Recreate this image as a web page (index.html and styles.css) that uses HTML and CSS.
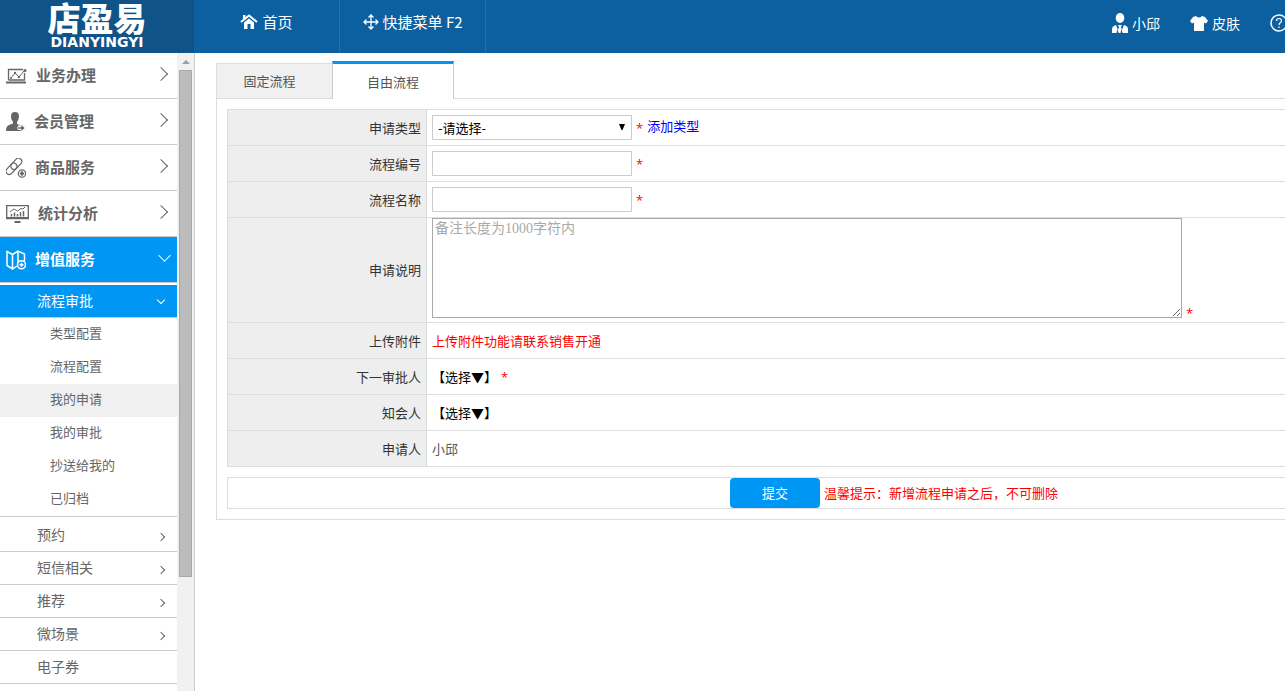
FILE: index.html
```html
<!DOCTYPE html>
<html lang="zh-CN">
<head>
<meta charset="utf-8">
<title>店盈易</title>
<link rel="stylesheet" href="styles.css">
</head>
<body>
<header class="header">
  <div class="logo"><span class="logo-name">店盈易</span><span class="logo-latin">DIANYINGYI</span></div>
  <nav class="top-nav">
    <a class="top-link home" href="#"><svg width="18" height="16" viewBox="0 0 18 16"><path d="M1 8 9 1.5 17 8" fill="none" stroke="#fff" stroke-width="2"/><path d="M3 1h2.500v3L3 6zM4 8.500 9 4.500l5 4V15h-3.500v-5h-3v5H4z" fill="#fff"/></svg>首页</a>
    <a class="top-link quick" href="#"><svg width="16" height="16" viewBox="0 0 16 16" fill="none" stroke="#fff" stroke-width="1.300"><path d="M8 1v14M1 8h14M5.500 3.500 8 1l2.500 2.500M5.500 12.500 8 15l2.500-2.500M3.500 5.500 1 8l2.500 2.500M12.500 5.500 15 8l-2.500 2.500"/></svg>快捷菜单 F2</a>
  </nav>
  <nav class="user-nav">
    <a class="user-link" href="#"><svg width="16" height="20" viewBox="0 0 16 20" fill="#fff"><ellipse cx="8" cy="5" rx="4.300" ry="5"/><path d="M0 20v-4q0-3 4-4l2 5 1-3-1-2h4l-1 2 1 3 2-5q4 1 4 4v4h-5.500l-1-4-1 4h-2l-1-4-1 4z"/></svg>小邱</a>
    <a class="user-link" href="#"><svg width="18" height="15" viewBox="0 0 18 15" fill="#fff"><path d="M6 0q3 3 6 0l3 1 3 4-2 2.500-2-1V15H4V6.500l-2 1L0 5l3-4z"/></svg>皮肤</a>
    <a class="user-link" href="#" aria-label="帮助"><svg width="18" height="18" viewBox="0 0 18 18" fill="none" stroke="#fff" stroke-width="1.500"><circle cx="9" cy="9" r="8"/><path d="M6.500 7q0-2.500 2.500-2.500T11.500 7Q11.500 8 10 9q-1 .7-1 2M9 12.500V14" stroke-width="1.200"/></svg></a>
  </nav>
</header>
<div class="body">
  <aside class="sidebar">
    <nav class="menu">
      <a class="group" href="#"><svg width="21" height="18" viewBox="0 0 21 18" fill="none" stroke="#666"><path d="M2.500 13V2.500H17M18.500 6v7H2.500" stroke-width="1.300"/><path d="M0 15.500h20" stroke-width="2"/><path d="m5 11 4-5 4 4 5-6"/><g fill="#666" stroke="none"><circle cx="5" cy="11" r="1"/><circle cx="9" cy="6" r="1.200"/><circle cx="13" cy="10" r="1.200"/><circle cx="19" cy="3.500" r="1.500"/></g></svg><span>业务办理</span><i class="arrow"></i></a>
      <a class="group" href="#"><svg width="19" height="20" viewBox="0 0 19 20" fill="#666"><path d="M9 0c5 0 4 5 3.500 7.500L11 10v2l4 1.500h-3V18h3v1H0q0-5 3-6l4-1.500V10L5.500 7.500C5 5 4 0 9 0z"/><path d="M11.500 15H15v-2.500l4 3.500-4 3.500V17h-3.500z" stroke="#fff" stroke-width=".6"/></svg><span>会员管理</span><i class="arrow"></i></a>
      <a class="group" href="#"><svg width="20" height="20" viewBox="0 0 20 20" fill="none" stroke="#666" stroke-width="1.200"><rect x="4" y="2.500" width="13" height="6.500" rx="3.200" transform="rotate(-48 10.500 6)"/><rect x="-1" y="7.500" width="13" height="6.500" rx="3.200" transform="rotate(-48 5.500 10.800)"/><circle cx="16" cy="15.500" r="3.700" fill="#fff"/><path d="M16 13.300v4.400M13.800 15.500h4.400" stroke-width="1.800"/></svg><span>商品服务</span><i class="arrow"></i></a>
      <a class="group" href="#"><svg width="23" height="18" viewBox="0 0 23 18" fill="none" stroke="#666"><path d="M.7.700h21.600v13H.7z" stroke-width="1.300"/><path d="M.5 13h22M8.500 17h6" stroke-width="2"/><path d="M5.500 11.500V9M8.500 11.500v-4M11.500 11.500V9M14.500 11.500V7M17.500 11.500V6" stroke-width="1.500"/><path d="m4 7 4-3 3.500 2L15 3.500l2 .5 2-2"/></svg><span>统计分析</span><i class="arrow"></i></a>
      <a class="group active" href="#"><svg width="20" height="20" viewBox="0 0 20 20" fill="none" stroke="#fff" stroke-width="1.500"><path d="M1 1.500v14l5.500 3.500V4.500zM6.500 4.500 12 1l6.500 3v7M12 1v15M6.500 19l4.500-3"/><circle cx="15.500" cy="14.800" r="4" fill="#0096f4"/><path d="M15.500 12.800v4M13.500 14.800h4"/></svg><span>增值服务</span><i class="arrow down"></i></a>
      <a class="sub active" href="#">流程审批<i class="arrow down small"></i></a>
      <div class="leaves">
        <a class="leaf" href="#">类型配置</a>
        <a class="leaf" href="#">流程配置</a>
        <a class="leaf current" href="#">我的申请</a>
        <a class="leaf" href="#">我的审批</a>
        <a class="leaf" href="#">抄送给我的</a>
        <a class="leaf" href="#">已归档</a>
      </div>
      <a class="sub" href="#">预约<i class="arrow small"></i></a>
      <a class="sub" href="#">短信相关<i class="arrow small"></i></a>
      <a class="sub" href="#">推荐<i class="arrow small"></i></a>
      <a class="sub" href="#">微场景<i class="arrow small"></i></a>
      <a class="sub" href="#">电子券</a>
    </nav>
    <div class="scrollbar"><div class="scroll-up"></div><div class="scroll-thumb"></div></div>
  </aside>
  <main class="content">
    <div class="tabs"><button class="tab" type="button">固定流程</button><button class="tab selected" type="button">自由流程</button></div>
    <form class="panel">
      <table class="form">
        <tr><th><label for="type">申请类型</label></th><td><div class="field"><span class="select-box"><select id="type"><option>-请选择-</option></select><svg class="caret" width="6" height="6" viewBox="0 0 6 6"><path d="M0 0h6L3.500 6h-1z"/></svg></span><span class="req">*</span><a class="add" href="#">添加类型</a></div></td></tr>
        <tr><th><label for="code">流程编号</label></th><td><div class="field"><input id="code" type="text"><span class="req">*</span></div></td></tr>
        <tr><th><label for="name">流程名称</label></th><td><div class="field"><input id="name" type="text"><span class="req">*</span></div></td></tr>
        <tr class="tall"><th><label for="note">申请说明</label></th><td><div class="field note"><textarea id="note" placeholder="备注长度为1000字符内"></textarea><span class="req">*</span></div></td></tr>
        <tr><th>上传附件</th><td class="warn">上传附件功能请联系销售开通</td></tr>
        <tr><th>下一审批人</th><td><div class="field"><button class="pick" type="button">【选择▼】</button><span class="req">*</span></div></td></tr>
        <tr><th>知会人</th><td><div class="field"><button class="pick" type="button">【选择▼】</button></div></td></tr>
        <tr><th>申请人</th><td>小邱</td></tr>
      </table>
      <div class="actions"><button class="submit" type="submit">提交</button><span class="tip">温馨提示：新增流程申请之后，不可删除</span></div>
    </form>
  </main>
</div>
</body>
</html>
```
FILE: styles.css
```css
* { box-sizing: border-box; }
body {
  margin: 0;
  height: 100vh;
  overflow: hidden;
  display: flex;
  flex-direction: column;
  background: #fff;
  color: #555;
  font: 13px/20px "Noto Sans CJK SC", sans-serif;
}
a { color: inherit; text-decoration: none; }
button, input, select, textarea { font: inherit; color: inherit; margin: 0; }
svg { flex: none; }

.header { flex: none; display: flex; height: 53px; background: #0d60a0; color: #fff; font-size: 15px; }
.logo { flex: none; width: 194px; background: #0f5389; display: flex; flex-direction: column; align-items: center; }
.logo-name { font-size: 33px; font-weight: 900; line-height: 35px; }
.logo-latin { font: bold 14px/14px "DejaVu Sans", sans-serif; }
.top-nav { display: flex; }
.top-link { display: flex; justify-content: center; align-items: center; gap: 4px; width: 146px; padding-bottom: 9px; border-right: 1px solid #2570ab; }
.user-nav { flex: 1 0 auto; display: flex; justify-content: flex-end; gap: 30px; margin-right: -3px; padding-bottom: 7px; }
.user-link { display: flex; align-items: center; gap: 4px; font-size: 14px; white-space: nowrap; }

.body { flex: 1; min-height: 0; display: flex; }
.sidebar { flex: none; width: 195px; display: flex; border-right: 1px solid #ccc; }
.menu { flex: 1; overflow: hidden; color: #666; }
.group { display: flex; align-items: center; gap: 9px; height: 46px; padding: 0 12px 0 6px; border-bottom: 1px solid #ccc; font-size: 15px; font-weight: bold; }
.group span { flex: 1; padding-bottom: 2px; }
.sub { display: flex; align-items: center; justify-content: space-between; height: 33px; padding: 0 13px 2px 37px; border-bottom: 1px solid #ccc; font-size: 14px; }
.group.active, .sub.active { background: #0096f4; color: #fff; }
.sub.active { margin-top: 2px; }
.leaves { border-bottom: 1px solid #ccc; }
.leaves + .sub { height: 35px; padding-bottom: 0; }
.leaf { display: flex; align-items: center; height: 33px; padding: 0 0 4px 50px; }
.current { background: #f0f0f0; }
.arrow { width: 10px; height: 10px; margin: 0 -1px 4px 0; border: solid currentColor; border-width: 1px 1px 0 0; transform: rotate(45deg); }
.arrow.down { width: 9px; height: 9px; margin: 0 -4px 8px 0; transform: rotate(135deg); }
.arrow.small { width: 6px; height: 6px; margin: 6px 0 0; }
.arrow.down.small { margin: 0; }
.scrollbar { flex: none; width: 17px; background: #f1f1f1; padding: 0 2px; display: flex; flex-direction: column; }
.scroll-up { height: 17px; display: flex; align-items: center; justify-content: center; }
.scroll-up::before { content: ""; border: 4px solid transparent; border-top: 0; border-bottom-color: #a0a0a0; }
.scroll-thumb { height: 79.4%; width: 13px; background: #bcbcbc; border: 1px solid #a8a8a8; }

.content { flex: 1; min-width: 0; padding: 8px 0 0 21px; }
.tabs { display: flex; align-items: flex-end; min-width: 1356px; height: 38px; border-bottom: 1px solid #ddd; }
.tab { width: 116px; height: 36px; margin-bottom: -1px; padding: 0 10px 0 0; border: 1px solid #ddd; border-right: 0; background: #f0f0f0; }
.tab.selected { width: 122px; height: 38px; padding: 0; border: 1px solid #ccc; border-top: 3px solid #0096f4; border-bottom: 0; background: #fff; }
.panel { min-width: 1356px; padding: 10px; border: 1px solid #ddd; border-top: 0; }
.form { width: 100%; border-collapse: collapse; table-layout: fixed; }
.form th, .form td { height: 36px; padding: 0 5px; border: 1px solid #ddd; }
.form th { width: 199px; background: #eee; color: #333; font-weight: normal; text-align: right; }
.form .tall th, .form .tall td { height: 105px; }
.field { display: flex; align-items: center; gap: 4px; }
.req { color: #f00; font-family: "Open Sans", sans-serif; }
.form td.warn { color: #f00; }
.tip { color: #f00; font-family: "Noto Sans CJK TC", sans-serif; }
.add { color: #00f; padding-bottom: 4px; }
.select-box { position: relative; display: flex; }
.select-box select, .field input { width: 200px; height: 25px; padding: 0 5px; border: 1px solid #ccc; border-radius: 0; background: #fff; color: #000; appearance: none; }
.caret { position: absolute; right: 7px; top: 9px; pointer-events: none; }
.note { align-items: flex-end; padding-bottom: 4px; }
.note textarea { width: 750px; height: 100px; padding: 0 2px; border: 1px solid #a9a9a9; font: 14px/20px "Liberation Serif", "Noto Sans CJK SC", sans-serif; }
.note textarea::placeholder { color: #a9a9a9; }
.note .req { line-height: 10px; }
.pick { padding: 0; border: 0; background: none; color: #000; }
.actions { display: flex; align-items: center; justify-content: center; gap: 4px; height: 32px; margin-top: 10px; border: 1px solid #ddd; }
.submit { width: 90px; height: 30px; border: 0; border-radius: 4px; background: #0096f4; color: #fff; }
```
